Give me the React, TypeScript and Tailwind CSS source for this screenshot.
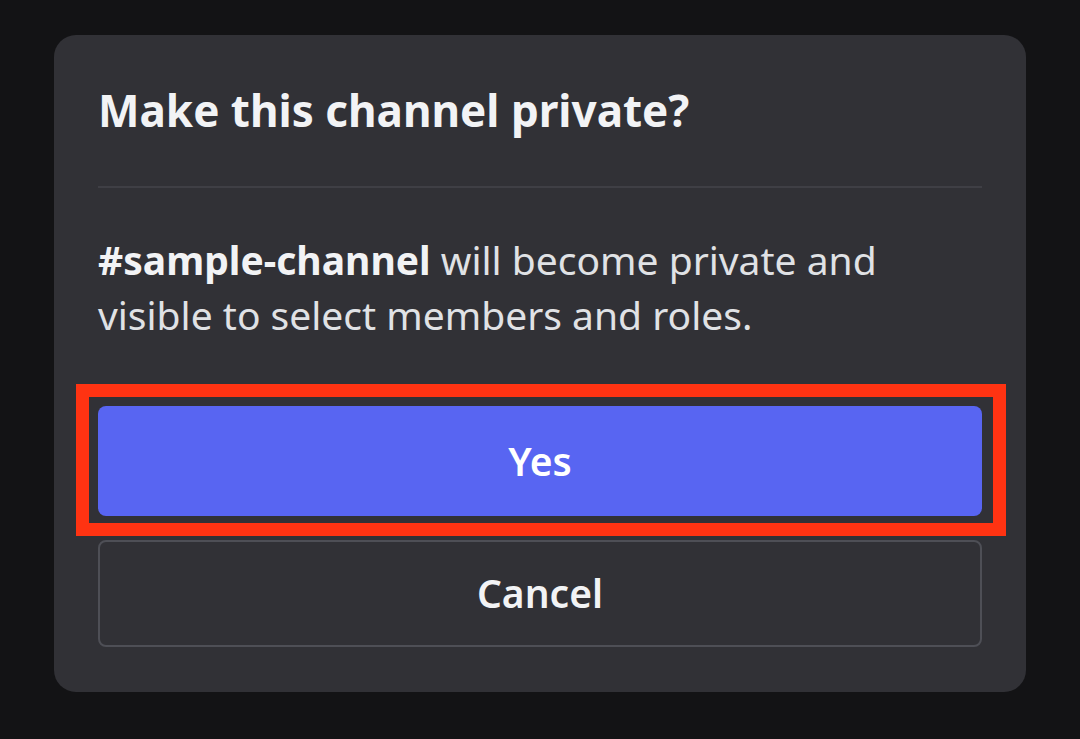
import React from 'react';

const App: React.FC = () => {
  return (
    <div
      className="min-h-screen w-full bg-[#131315] pt-[35px] pl-[54px]"
      style={{ fontFamily: '"Noto Sans", "Open Sans", sans-serif' }}
    >
      <div className="flex h-[657px] w-[972px] flex-col rounded-[22px] bg-[#313136] px-[44px]">
        <h1 className="mt-[53px] text-[44px] font-bold leading-[44px] text-[#f2f3f5]">
          Make this channel private?
        </h1>
        <div className="mt-[54px] h-[2px] bg-[#3f3f45]" />
        <p className="mt-[44px] text-[39px] leading-[55px] text-[#e0e2e5]">
          <span className="font-bold text-[#f2f3f5]">#sample-channel</span> will become private and
          <br />
          visible to select members and roles.
        </p>

        <div className="relative mt-[64px]">
          <button className="flex h-[110px] w-full items-center justify-center rounded-[8px] bg-[#5865f2] text-[39px] font-semibold text-white">
            Yes
          </button>
          {/* highlight box drawn over the button */}
          <div className="pointer-events-none absolute -left-[22px] -right-[24px] -top-[22px] -bottom-[20px] border-[13px] border-[#ff3312]" />
        </div>

        <button className="mt-[24px] flex h-[107px] w-full items-center justify-center rounded-[8px] border-2 border-[#4e4f56] text-[39px] font-semibold text-[#f2f3f5]">
          Cancel
        </button>
      </div>
    </div>
  );
};

export default App;
